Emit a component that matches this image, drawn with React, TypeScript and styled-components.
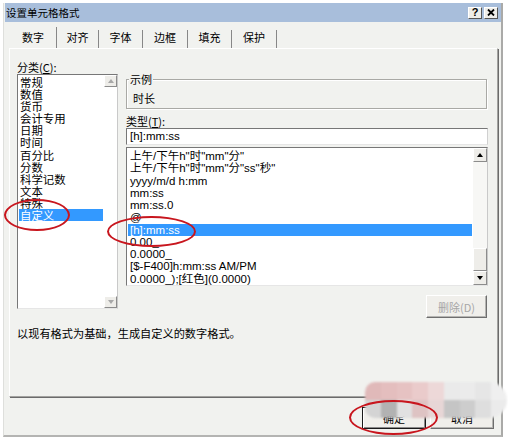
import React from "react";
import styled, { createGlobalStyle } from "styled-components";

const GlobalStyle = createGlobalStyle`
  html, body {
    margin: 0;
    padding: 0;
    background: #ffffff;
  }
  body {
    font-family: "Liberation Sans", "Noto Sans CJK SC", sans-serif;
    font-size: 11px;
    color: #000000;
  }
  * {
    box-sizing: border-box;
  }
`;

const CJK = `"Noto Sans CJK SC", "Liberation Sans", sans-serif`;
const FACE = "#f1f2ef";

const Page = styled.div`
  position: relative;
  width: 508px;
  height: 441px;
  overflow: hidden;
  padding: 3px 0 0 3px;
`;

const Dialog = styled.div`
  width: 500px;
  height: 434px;
  background: ${FACE};
  border-left: 1px solid #dedfdc;
  border-right: 2px solid #aaaaa8;
  border-bottom: 2px solid #b4b4b2;
  display: flex;
  flex-direction: column;
`;

const TitleBar = styled.div`
  height: 19px;
  margin-left: 1px;
  padding: 0 3px 0 1px;
  background: #a8bedb;
  display: flex;
  align-items: center;
  justify-content: space-between;
`;

const TitleText = styled.div`
  font-family: ${CJK};
  font-size: 10.5px;
  line-height: 12px;
`;

const TitleButtons = styled.div`
  display: flex;
  gap: 2px;
`;

const TitleButton = styled.div`
  width: 14px;
  height: 12px;
  background: #eeede9;
  border: 1px solid;
  border-color: #ffffff #555555 #555555 #ffffff;
  display: flex;
  align-items: center;
  justify-content: center;
  font-weight: bold;
  font-size: 11px;
  line-height: 1;
`;

const Body = styled.div`
  padding: 5px 3px 0 5px;
  display: flex;
  flex-direction: column;
`;

const TabStrip = styled.div`
  height: 21px;
  padding-left: 1px;
  display: flex;
  align-items: flex-end;
`;

const Tab = styled.div<{ $width: number; $active?: boolean }>`
  width: ${(p) => p.$width}px;
  height: ${(p) => (p.$active ? 21 : 18)}px;
  padding-top: ${(p) => (p.$active ? 4 : 1)}px;
  line-height: 13px;
  text-align: center;
  border-right: 1px solid #878787;
  font-family: ${CJK};
  font-size: 11px;
`;

const Pane = styled.div`
  height: 349px;
  border-top: 1px solid #ffffff;
  border-left: 1px solid #ffffff;
  border-right: 1px solid #a3a3a0;
  border-bottom: 1px solid #a3a3a0;
  box-shadow: 1px 1px 0 #6b6b6b;
  padding: 12px 9px 0 7px;
  display: flex;
  flex-direction: column;
`;

const TopGrid = styled.div`
  display: grid;
  grid-template-columns: 101px 1fr;
  column-gap: 8px;
`;

const Column = styled.div`
  display: flex;
  flex-direction: column;
  min-width: 0;
`;

const FieldLabel = styled.div<{ $top?: number }>`
  margin-top: ${(p) => p.$top ?? 0}px;
  height: 12px;
  line-height: 12px;
  font-family: ${CJK};
  font-size: 11px;
  white-space: nowrap;

  u {
    text-decoration: underline;
  }
`;

const ListBox = styled.div<{ $height: number; $top: number }>`
  margin-top: ${(p) => p.$top}px;
  height: ${(p) => p.$height}px;
  background: #ffffff;
  border: 1px solid;
  border-color: #777777 #c9c9c9 #e6e6e6 #777777;
  display: flex;
`;

const Rows = styled.div<{ $padTop: number }>`
  flex: 1;
  min-width: 0;
  padding: ${(p) => p.$padTop}px 1px 0 1px;
  display: flex;
  flex-direction: column;
`;

const CategoryRow = styled.div<{ $active?: boolean }>`
  height: 12.1px;
  line-height: 12px;
  padding-left: 1px;
  font-family: ${CJK};
  font-size: 11.4px;
  white-space: nowrap;
  background: ${(p) => (p.$active ? "#3399ff" : "transparent")};
  color: ${(p) => (p.$active ? "#ffffff" : "#000000")};
`;

const TypeRow = styled.div<{ $active?: boolean }>`
  height: 12.3px;
  line-height: 12.3px;
  padding-left: 2px;
  font-size: 11.5px;
  white-space: nowrap;
  overflow: hidden;
  background: ${(p) => (p.$active ? "#3399ff" : "transparent")};
  color: ${(p) => (p.$active ? "#ffffff" : "#000000")};
`;

const ScrollBar = styled.div<{ $width: number }>`
  width: ${(p) => p.$width}px;
  display: flex;
  flex-direction: column;
`;

const ScrollButton = styled.div<{ $height: number }>`
  height: ${(p) => p.$height}px;
  background: #eeede9;
  border: 1px solid;
  border-color: #ffffff #8c8c8c #8c8c8c #ffffff;
  display: flex;
  align-items: center;
  justify-content: center;
`;

const Track = styled.div<{ $bg?: string }>`
  flex: 1;
  display: flex;
  flex-direction: column;
  justify-content: flex-end;
  background: ${(p) => p.$bg ?? "#f7f7f5"};
`;

const Thumb = styled.div`
  height: 23px;
  background: #eeede9;
  border: 1px solid;
  border-color: #ffffff #8c8c8c #8c8c8c #ffffff;
`;

const SampleGroup = styled.fieldset`
  margin: 12px 1px 0 0;
  padding: 7px 4px 4px 2px;
  min-width: 0;
  border: 1px solid #a9a9a5;
  box-shadow: inset 1px 1px 0 #ffffff, 1px 1px 0 #ffffff;
`;

const SampleLegend = styled.legend`
  padding: 0 1px;
  line-height: 12px;
  font-family: ${CJK};
  font-size: 11px;
  background: ${FACE};
`;

const SampleText = styled.div`
  padding-left: 4px;
  line-height: 12px;
  font-family: ${CJK};
  font-size: 11px;
`;

const TypeField = styled.div`
  margin-top: 1px;
  height: 17px;
  padding-left: 3px;
  background: #ffffff;
  border: 1px solid;
  border-color: #777777 #d0d0d0 #e6e6e6 #777777;
  line-height: 15px;
  font-size: 11.5px;
`;

const DeleteRow = styled.div`
  margin-top: 9px;
  padding-right: 1px;
  display: flex;
  justify-content: flex-end;
`;

const PushButton = styled.div<{ $width: number; $height: number; $disabled?: boolean; $default?: boolean }>`
  width: ${(p) => p.$width}px;
  height: ${(p) => p.$height}px;
  background: #f0efeb;
  border: 1px solid;
  border-color: ${(p) => (p.$default ? "#1a1a1a" : "#ffffff #6e6e6e #6e6e6e #ffffff")};
  box-shadow: ${(p) =>
    p.$default ? "inset 1px 1px 0 #ffffff, inset -1px -1px 0 #8a8a8a" : "inset -1px -1px 0 #b5b5b2"};
  display: flex;
  align-items: center;
  justify-content: center;
  font-family: ${CJK};
  font-size: 11px;
  line-height: 12px;
  color: ${(p) => (p.$disabled ? "#a6a6a6" : "#000000")};
`;

const Description = styled.div`
  margin-top: 9px;
  line-height: 12px;
  font-family: ${CJK};
  font-size: 11.2px;
`;

const Footer = styled.div`
  margin-top: 10px;
  padding-right: 7px;
  display: flex;
  justify-content: flex-end;
  gap: 4px;
`;

const Ring = styled.div<{ $x: number; $y: number; $w: number; $h: number }>`
  position: absolute;
  left: ${(p) => p.$x}px;
  top: ${(p) => p.$y}px;
  width: ${(p) => p.$w}px;
  height: ${(p) => p.$h}px;
  border: 2.5px solid #c8161e;
  border-radius: 50%;
  pointer-events: none;
`;

const Mosaic = styled.div`
  position: absolute;
  left: 365px;
  top: 382px;
  width: 142px;
  height: 36px;
  border-radius: 10px 18px 18px 10px;
  overflow: hidden;
  display: grid;
  grid-template-columns: repeat(9, 1fr);
  grid-template-rows: 1fr 1fr;
  filter: blur(0.8px);
`;

const Tile = styled.div<{ $c: string }>`
  background: ${(p) => p.$c};
`;

const Arrow = ({ down, dim }: { down?: boolean; dim?: boolean }) => (
  <svg width="6" height="4" viewBox="0 0 6 4">
    <polygon points={down ? "0,0 6,0 3,4" : "0,4 6,4 3,0"} fill={dim ? "#a8a8a8" : "#000000"} />
  </svg>
);

const CloseGlyph = () => (
  <svg width="8" height="7" viewBox="0 0 8 7">
    <path d="M1 0.5 L7 6.5 M7 0.5 L1 6.5" stroke="#000" strokeWidth="1.8" />
  </svg>
);

const tabs = [
  { label: "数字", width: 47 },
  { label: "对齐", width: 42 },
  { label: "字体", width: 44 },
  { label: "边框", width: 45 },
  { label: "填充", width: 44 },
  { label: "保护", width: 45 },
];

const categories = ["常规", "数值", "货币", "会计专用", "日期", "时间", "百分比", "分数", "科学记数", "文本", "特殊", "自定义"];

const formats = [
  '上午/下午h"时"mm"分"',
  '上午/下午h"时"mm"分"ss"秒"',
  "yyyy/m/d h:mm",
  "mm:ss",
  "mm:ss.0",
  "@",
  "[h]:mm:ss",
  "0.00_",
  "0.0000_",
  "[$-F400]h:mm:ss AM/PM",
  "0.0000_);[红色](0.0000)",
];

const mosaic = [
  "#e0b9b9", "#e4bebe", "#e6c2c2", "#eacbcb", "#edd8d8", "#eaeaea", "#ebebeb", "#e6e6e6", "#efefef",
  "#d4d4d4", "#b2b2b2", "#e1e1e1", "#dec3c3", "#e7d6d6", "#c5c5c5", "#cdcdcd", "#dedede", "#ebebeb",
];

export default function App() {
  return (
    <Page>
      <GlobalStyle />
      <Dialog>
        <TitleBar>
          <TitleText>设置单元格格式</TitleText>
          <TitleButtons>
            <TitleButton>?</TitleButton>
            <TitleButton>
              <CloseGlyph />
            </TitleButton>
          </TitleButtons>
        </TitleBar>

        <Body>
          <TabStrip>
            {tabs.map((t, i) => (
              <Tab key={t.label} $width={t.width} $active={i === 0}>
                {t.label}
              </Tab>
            ))}
          </TabStrip>

          <Pane>
            <TopGrid>
              <Column>
                <FieldLabel>
                  分类(<u>C</u>):
                </FieldLabel>
                <ListBox $top={1} $height={235}>
                  <Rows $padTop={1}>
                    {categories.map((c, i) => (
                      <CategoryRow key={c} $active={i === categories.length - 1}>
                        {c}
                      </CategoryRow>
                    ))}
                  </Rows>
                  <ScrollBar $width={13}>
                    <ScrollButton $height={12}>
                      <Arrow dim />
                    </ScrollButton>
                    <Track $bg="#ffffff" />
                    <ScrollButton $height={12}>
                      <Arrow down dim />
                    </ScrollButton>
                  </ScrollBar>
                </ListBox>
              </Column>

              <Column>
                <SampleGroup>
                  <SampleLegend>示例</SampleLegend>
                  <SampleText>时长</SampleText>
                </SampleGroup>

                <FieldLabel $top={6}>
                  类型(<u>T</u>):
                </FieldLabel>
                <TypeField>[h]:mm:ss</TypeField>

                <ListBox $top={2} $height={139}>
                  <Rows $padTop={2}>
                    {formats.map((f, i) => (
                      <TypeRow key={f} $active={i === 6}>
                        {f}
                      </TypeRow>
                    ))}
                  </Rows>
                  <ScrollBar $width={14}>
                    <ScrollButton $height={14}>
                      <Arrow />
                    </ScrollButton>
                    <Track>
                      <Thumb />
                    </Track>
                    <ScrollButton $height={14}>
                      <Arrow down />
                    </ScrollButton>
                  </ScrollBar>
                </ListBox>

                <DeleteRow>
                  <PushButton $width={61} $height={23} $disabled>
                    删除(D)
                  </PushButton>
                </DeleteRow>
              </Column>
            </TopGrid>

            <Description>以现有格式为基础，生成自定义的数字格式。</Description>
          </Pane>
        </Body>

        <Footer>
          <PushButton $width={64} $height={22} $default>
            确定
          </PushButton>
          <PushButton $width={64} $height={22}>
            取消
          </PushButton>
        </Footer>
      </Dialog>

      <Ring $x={4} $y={199} $w={66} $h={32} />
      <Ring $x={107} $y={216} $w={89} $h={31} />
      <Mosaic>
        {mosaic.map((c, i) => (
          <Tile key={i} $c={c} />
        ))}
      </Mosaic>
      <Ring $x={349} $y={400} $w={89} $h={35} />
    </Page>
  );
}
